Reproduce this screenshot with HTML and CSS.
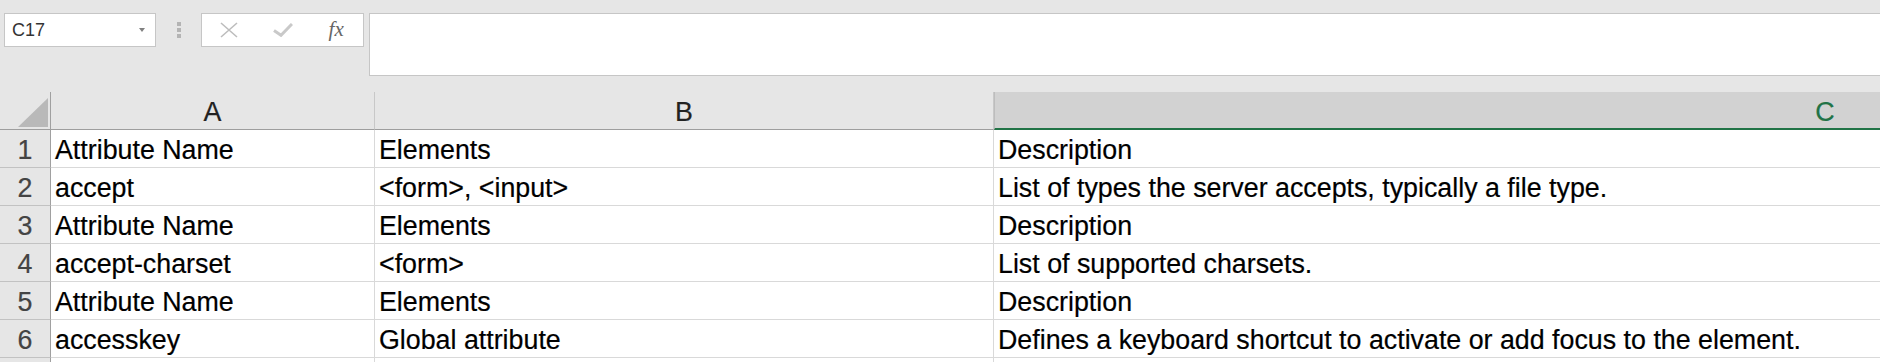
FILE: index.html
```html
<!DOCTYPE html>
<html lang="en">
  <head>
    <meta charset="UTF-8" />
    <title>Sheet</title>
    <link rel="stylesheet" href="styles.css">
  </head>
  <body>
    <!-- formula bar -->
    <header class="toolbar">
      <div class="name-box">
        <span class="name">C17</span>
        <span class="caret"></span>
      </div>
      <div class="grip"><i></i><i></i><i></i></div>
      <div class="fn-box">
        <span class="fn-btn">
          <svg width="18" height="16" viewBox="0 0 18 16">
            <path d="M1 1L17 15M17 1L1 15" stroke="#bdbdbd" stroke-width="1.6" fill="none" />
          </svg>
        </span>
        <span class="fn-btn">
          <svg width="20" height="14" viewBox="0 0 20 14">
            <path d="M1 7.5L8 12.3L19 1" stroke="#c9c9c9" stroke-width="3" fill="none" />
          </svg>
        </span>
        <span class="fn-btn fx">fx</span>
      </div>
      <div class="formula"></div>
    </header>

    <!-- grid -->
    <main class="viewport">
      <div class="sheet">
        <div class="corner"><span class="corner-tri"></span></div>
        <div class="col-head">A</div>
        <div class="col-head">B</div>
        <div class="col-head active">C</div>

        <div class="row-head">1</div>
        <div class="cell">Attribute Name</div>
        <div class="cell">Elements</div>
        <div class="cell">Description</div>

        <div class="row-head">2</div>
        <div class="cell">accept</div>
        <div class="cell">&lt;form&gt;, &lt;input&gt;</div>
        <div class="cell">List of types the server accepts, typically a file type.</div>

        <div class="row-head">3</div>
        <div class="cell">Attribute Name</div>
        <div class="cell">Elements</div>
        <div class="cell">Description</div>

        <div class="row-head">4</div>
        <div class="cell">accept-charset</div>
        <div class="cell">&lt;form&gt;</div>
        <div class="cell">List of supported charsets.</div>

        <div class="row-head">5</div>
        <div class="cell">Attribute Name</div>
        <div class="cell">Elements</div>
        <div class="cell">Description</div>

        <div class="row-head">6</div>
        <div class="cell">accesskey</div>
        <div class="cell">Global attribute</div>
        <div class="cell">Defines a keyboard shortcut to activate or add focus to the element.</div>

        <!-- partly visible row -->
        <div class="row-head"></div>
        <div class="cell"></div>
        <div class="cell"></div>
        <div class="cell"></div>
      </div>
    </main>
  </body>
</html>
```
FILE: styles.css
```css
/* resets */
* {
  padding: 0;
  margin: 0;
  box-sizing: border-box;
}
body {
  font-family: "Liberation Sans", Arial, sans-serif;
  background-color: #e6e6e6;
  overflow: hidden;
  width: 1880px;
  height: 362px;
}

/* formula bar */
.toolbar {
  display: flex;
  align-items: flex-start;
  height: 92px;
  padding: 13px 0 16px 4px;
  overflow: hidden;
}
.name-box {
  width: 152px;
  height: 34px;
  background-color: #fff;
  border: 1px solid #c6c6c6;
  display: flex;
  align-items: center;
  justify-content: space-between;
  padding: 0 10px 0 7px;
}
.name {
  font-size: 18px;
  color: #333;
}
.caret {
  width: 0;
  height: 0;
  border-left: 3.5px solid transparent;
  border-right: 3.5px solid transparent;
  border-top: 4px solid #808080;
}
.grip {
  width: 45px;
  display: flex;
  flex-direction: column;
  align-items: center;
  gap: 2px;
  padding-top: 9px;
}
.grip i {
  display: block;
  width: 4px;
  height: 4px;
  background-color: #b4b4b4;
}
.fn-box {
  width: 163px;
  height: 34px;
  background-color: #fff;
  border: 1px solid #c6c6c6;
  display: flex;
  align-items: center;
}
.fn-btn {
  flex: 1;
  display: flex;
  align-items: center;
  justify-content: center;
}
.fx {
  font-family: "Liberation Serif", serif;
  font-style: italic;
  font-size: 21px;
  color: #666;
  padding-bottom: 2px;
}
.formula {
  flex: 1;
  height: 63px;
  margin-left: 5px;
  background-color: #fff;
  border: 1px solid #c6c6c6;
  border-right: none;
}

/* sheet */
.viewport {
  width: 1880px;
  height: 270px;
  overflow: hidden;
}
.sheet {
  display: grid;
  grid-template-columns: 51px 324px 619px 1662px;
  grid-auto-rows: 38px;
  width: max-content;
  font-size: 26.8px;
  line-height: 1;
  -webkit-text-stroke: 0.2px currentColor;
}
.cell,
.col-head,
.row-head,
.corner {
  display: flex;
  align-items: flex-end;
  white-space: nowrap;
  border-right: 1px solid #d9d9d9;
  border-bottom: 1px solid #d9d9d9;
  padding: 0 4px 3px 4px;
}
.cell {
  background-color: #fff;
  color: #000;
}
.col-head {
  justify-content: center;
  color: #222;
  border-right-color: #c8c8c8;
  border-bottom-color: #9e9e9e;
}
.col-head.active {
  background-color: #d2d2d2;
  color: #217346;
  border-left: 1px solid #bdbdbd;
  border-bottom: 2px solid #217346;
  padding-bottom: 2px;
}
.row-head {
  justify-content: center;
  color: #444;
  border-right-color: #a0a0a0;
  border-bottom-color: #c2c2c2;
}
.corner {
  border-right-color: #a0a0a0;
  border-bottom-color: #9e9e9e;
  justify-content: flex-end;
  padding: 0 2px 2px 0;
}
.corner-tri {
  width: 30px;
  height: 29px;
  background-color: #b9b9b9;
  clip-path: polygon(100% 0, 100% 100%, 0 100%);
}
```
